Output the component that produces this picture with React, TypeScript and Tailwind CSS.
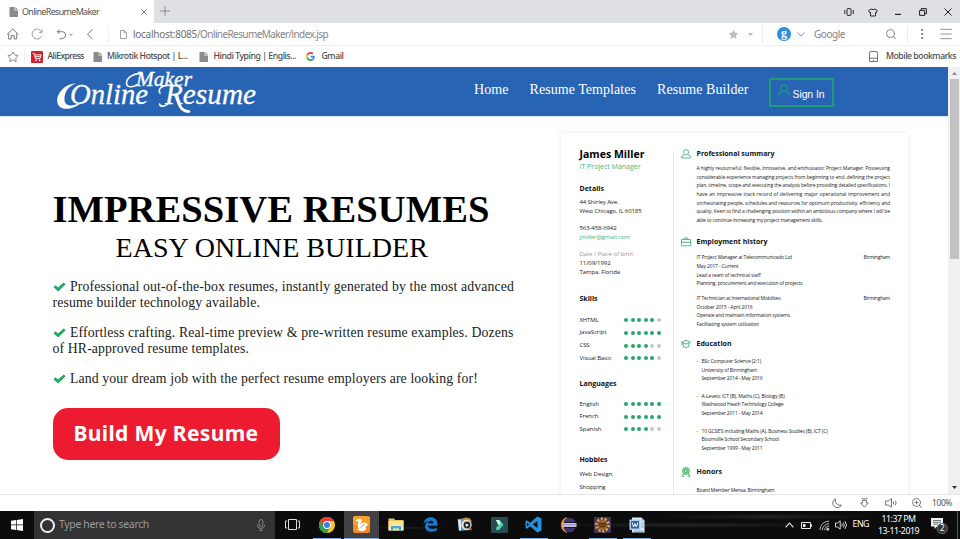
import { useLayoutEffect, useRef, type ReactNode } from "react";
import { Menu, MoreVertical, Search, Star, ZoomIn } from "lucide-react";

/*
 * Single line of text that spans exactly `w` pixels: the slack goes between
 * the letters, or between the words when `words` is set.
 */
function Fit({ w, words, className = "", children }: { w: number; words?: boolean; className?: string; children: string }) {
  const ref = useRef<HTMLSpanElement>(null);
  useLayoutEffect(() => {
    const el = ref.current;
    if (!el) return;
    el.style.letterSpacing = "0px";
    el.style.wordSpacing = "0px";
    const slack = w - el.getBoundingClientRect().width;
    if (words && slack > 0) el.style.wordSpacing = `${slack / (children.split(" ").length - 1)}px`;
    else el.style.letterSpacing = `${slack / children.length}px`;
  }, [w, words, children]);
  return (
    <span ref={ref} className={`inline-block whitespace-nowrap ${className}`}>
      {children}
    </span>
  );
}

function PageIcon({ className = "" }: { className?: string }) {
  return (
    <svg viewBox="0 0 9 10" className={`h-[10px] w-[9px] shrink-0 ${className}`}>
      <path d="M0.5 0H5.6V3.4H9V10H0.5Z" fill="#8b8b8d" />
      <path d="M6.3 0L9 2.7H6.3Z" fill="#8b8b8d" />
    </svg>
  );
}

function TabBar() {
  return (
    <div className="flex h-[23px] shrink-0 bg-[#dfe0e4]">
      <div className="flex w-[154px] items-center bg-white">
        <PageIcon className="ml-[9px]" />
        <Fit w={77} className="ml-[4px] text-[9px] text-[#555]">OnlineResumeMaker</Fit>
        <svg viewBox="0 0 6 6" className="ml-[42px] h-[6px] w-[6px]" stroke="#555" strokeWidth="0.8">
          <path d="M0.3 0.3L5.7 5.7M5.7 0.3L0.3 5.7" />
        </svg>
      </div>
      <svg viewBox="0 0 10 10" className="mt-[6px] ml-[6px] h-[10px] w-[10px]" stroke="#77787c" strokeWidth="0.8">
        <path d="M5 0V10M0 5H10" />
      </svg>
      <div className="ml-auto flex items-center pt-[1px] pr-[8px]">
        <svg viewBox="0 0 10 8" className="h-[8px] w-[10px]" fill="none" stroke="#2b2b2b" strokeWidth="1">
          <rect x="3" y="0.6" width="4" height="6.8" rx="0.6" />
          <path d="M0.8 2V6M9.2 2V6" />
        </svg>
        <svg viewBox="0 0 10 9" className="ml-[14px] h-[9px] w-[10px]" fill="none" stroke="#2b2b2b" strokeWidth="1">
          <path d="M3.2 1Q5 2.400 6.800 1L9.300 2.600L8.400 4.700L7.500 4.400V8H2.500V4.400L1.600 4.700L0.700 2.600Z" />
        </svg>
        <svg viewBox="0 0 6 8" className="ml-[17px] h-[8px] w-[6px]" stroke="#222" strokeWidth="1.2">
          <path d="M0 6.4H6" />
        </svg>
        <svg viewBox="0 0 8 8" className="ml-[18px] h-[8px] w-[8px]" fill="none" stroke="#222" strokeWidth="1">
          <path d="M0.6 2.4H5.6V7.4H0.6ZM2.2 2.2V0.6H7.4V5.8H5.8" />
        </svg>
        <svg viewBox="0 0 8 8" className="ml-[17px] h-[8px] w-[8px]" stroke="#222" strokeWidth="1">
          <path d="M0.5 0.5L7.5 7.5M7.5 0.5L0.5 7.5" />
        </svg>
      </div>
    </div>
  );
}

function AddressBar() {
  return (
    <div className="flex h-[23px] shrink-0 items-center border-b border-[#eeeeef] bg-white">
      <svg viewBox="0 0 110 22" className="h-[22px] w-[110px] shrink-0" fill="none" stroke="#6b6b6b" strokeWidth="0.9">
        <path d="M7 11.5L12.7 6L18.4 11.5M8.7 10.5V16H11.2V12.6H14.2V16H16.7V10.5" />
        <path d="M41.6 13.2A5 5 0 1 1 41.7 9.2M42 6.4V9.4H39.2" stroke="#949494" />
        <path d="M59.5 6.5L57.3 8.7L59.5 10.9M57.5 8.7H62.5Q65.7 9 65.7 12T62 15.8H59.5" />
        <path d="M69.5 10.8L71 12.3L72.5 10.8" />
        <path d="M92.5 6.3L87.5 11.3L92.5 16.3" />
        <path d="M108.5 3V20" stroke="#eeeeef" />
      </svg>
      <svg viewBox="0 0 7 9" className="ml-[10px] h-[9px] w-[7px]" fill="none" stroke="#8c8c8c" strokeWidth="0.8">
        <path d="M0.5 0.5H4.4L6.5 2.6V8.5H0.5ZM4.2 0.6V2.8H6.4" />
      </svg>
      <div className="ml-[6px] flex text-[10px] leading-none">
        <Fit w={64} className="text-[#707070]">localhost:8085</Fit>
        <Fit w={131} className="text-[#858585]">/OnlineResumeMaker/index.jsp</Fit>
      </div>
      <div className="ml-auto flex items-center">
        <Star size={11} fill="#c1c1c4" stroke="none" />
        <svg viewBox="0 0 5 3" className="ml-[9px] h-[3px] w-[5px]"><path d="M0 0H5L2.5 3Z" fill="#b9b9bc" /></svg>
        <div className="ml-[9px] h-[17px] w-px bg-[#ececee]" />
        <div className="ml-[14px] flex h-[14px] w-[14px] items-center justify-center rounded-full bg-[#2a8fe0]">
          <span className="mt-[-3px] font-['Liberation_Serif',serif] text-[12px] leading-none font-bold text-white">g</span>
        </div>
        <svg viewBox="0 0 8 5" className="ml-[6px] h-[5px] w-[8px]" fill="none" stroke="#8a8a8a" strokeWidth="0.9"><path d="M0.5 0.5L4 4.2L7.5 0.5" /></svg>
        <Fit w={31} className="ml-[9px] text-[10px] text-[#858585]">Google</Fit>
        <Search size={12} strokeWidth={1.8} className="ml-[40px] text-[#777]" />
        <div className="ml-[10px] h-[17px] w-px bg-[#ececee]" />
        <MoreVertical size={14} strokeWidth={1.4} className="ml-[7px] text-[#555]" />
        <Menu size={16} strokeWidth={1.2} className="mr-[6px] ml-[9px] text-[#777]" />
      </div>
    </div>
  );
}

function BookmarksBar() {
  return (
    <div className="flex h-[21px] shrink-0 items-center bg-white text-[8.700px] font-medium text-[#4a4a4a]">
      <Star size={12} strokeWidth={1.6} className="ml-[7px] text-[#666]" />
      <div className="ml-[5px] h-[14px] w-px bg-[#efeff0]" />
      <svg viewBox="0 0 12 12" className="ml-[6px] h-[12px] w-[12px]">
        <rect width="12" height="12" rx="1" fill="#d3202c" />
        <path d="M1.6 2.4H3.1L4.5 7.6H9L10.2 3.9H3.6M4 5.7H9.5" fill="none" stroke="#fff" strokeWidth="0.9" />
        <circle cx="5" cy="9.3" r="0.9" fill="#fff" /><circle cx="8.6" cy="9.3" r="0.9" fill="#fff" />
      </svg>
      <Fit w={36.5} className="ml-[4.5px]">AliExpress</Fit>
      <PageIcon className="ml-[8.5px]" />
      <Fit w={80.5} className="ml-[5.5px]">Mikrotik Hotspot | L...</Fit>
      <PageIcon className="ml-[11px]" />
      <Fit w={82.5} className="ml-[6px]">Hindi Typing | Englis...</Fit>
      <svg viewBox="0 0 48 48" className="ml-[9.500px] h-[9px] w-[9px]">
        <path fill="#EA4335" d="M24 9.5c3.5 0 6.700 1.200 9.200 3.600l6.900-6.900C35.900 2.400 30.500 0 24 0 14.600 0 6.500 5.400 2.600 13.200l8 6.200C12.400 13.700 17.700 9.500 24 9.500z" />
        <path fill="#4285F4" d="M47 24.600c0-1.600-.2-3.100-.4-4.600H24v9h12.900c-.6 3-2.300 5.500-4.800 7.200l7.700 6C44.400 38 47 31.900 47 24.600z" />
        <path fill="#FBBC05" d="M10.500 28.600c-.5-1.500-.8-3-.8-4.600s.3-3.100.8-4.600l-8-6.200C.9 16.500 0 20.100 0 24s.9 7.500 2.600 10.800z" />
        <path fill="#34A853" d="M24 48c6.500 0 11.900-2.100 15.900-5.800l-7.700-6c-2.200 1.500-4.900 2.300-8.200 2.300-6.300 0-11.600-4.200-13.500-9.900l-8 6.200C6.500 42.600 14.600 48 24 48z" />
      </svg>
      <Fit w={22} className="ml-[7px]">Gmail</Fit>
      <svg viewBox="0 0 9 11" className="ml-auto h-[11px] w-[9px]" fill="none" stroke="#666" strokeWidth="0.9">
        <path d="M0.5 2Q0.500 0.500 2 0.500H7Q8.500 0.500 8.500 2V10.500H0.500ZM0.500 7.200H8.500M4.500 9V10.200" />
      </svg>
      <Fit w={70} className="mr-[4px] ml-[8px]">Mobile bookmarks</Fit>
    </div>
  );
}

/* Script wordmark with swashes on the capital letters. */
function Logo() {
  return (
    <svg viewBox="0 0 206 46" className="mt-[2px] ml-[56px] h-[46px] w-[206px]" fill="#fff">
      <g fontFamily="'Liberation Serif', serif" fontStyle="italic" stroke="#fff" strokeWidth="0.300">
        <text x="80" y="16.500" fontSize="20" textLength="56" lengthAdjust="spacingAndGlyphs">Maker</text>
        <text x="14" y="35" fontSize="30" textLength="78" lengthAdjust="spacingAndGlyphs">Online</text>
        <text x="109" y="35" fontSize="30" textLength="91" lengthAdjust="spacingAndGlyphs">Resume</text>
      </g>
      <path d="M20 14.500C8 14.500 -0.500 26 1.500 34C3.500 43 19 41 27 32C18 38 9 38 8.500 31C8 24 12 17 20 14.500Z" />
      <g fill="none" stroke="#fff" strokeLinecap="round">
        <path d="M86 4.500C78 3.500 70 9 70.500 14.500C71 19 78 18.500 81 15.500" strokeWidth="1.600" />
        <path d="M116 16.500C107 15 101 20 104 24" strokeWidth="1.600" />
        <path d="M113 34C109 38 104 38 103.500 35" strokeWidth="1.600" />
        <path d="M121 26C122 36 126 42.500 133 42.500" strokeWidth="2.600" />
      </g>
    </svg>
  );
}

function SiteNav() {
  return (
    <nav className="flex h-[49px] shrink-0 bg-[#2864b4] font-['Liberation_Serif',serif] text-[14px] leading-[16px] text-white">
      <Logo />
      <div className="mt-[14.500px] ml-[212px] flex">
        <Fit w={34.5}>Home</Fit>
        <Fit w={106.5} className="ml-[21px]">Resume Templates</Fit>
        <Fit w={91.5} className="ml-[21px]">Resume Builder</Fit>
      </div>
      <button className="mt-[11px] ml-[20px] flex h-[29px] w-[65px] items-center border-2 border-[#1f9c74] pl-[7px]">
        <svg viewBox="0 0 12 13" className="mt-[-4px] h-[13px] w-[12px] shrink-0" fill="none" stroke="#1f9c7c" strokeWidth="1.2">
          <circle cx="6" cy="4" r="3.2" />
          <path d="M0.700 12.500C0.700 9.500 2.500 7.800 4.200 7.200M11.300 12.500C11.300 9.500 9.500 7.800 7.800 7.200" />
        </svg>
        <Fit w={32} className="mt-[3px] ml-[3px] font-['Liberation_Sans',sans-serif] text-[10.500px]">Sign In</Fit>
      </button>
    </nav>
  );
}

function Check() {
  return (
    <svg viewBox="0 0 13 10" className="mr-[4.500px] inline-block h-[10px] w-[13px] align-[-1px]">
      <path d="M0.500 5.300L2.600 3.300L5 5.500L10.600 0.400L12.700 2.200L5.100 9.600Z" fill="#20a964" />
    </svg>
  );
}

function Hero() {
  return (
    <section className="w-[561px] shrink-0 pt-[70px] pl-[52.500px] font-['Liberation_Serif',serif] text-black">
      <h1 className="h-[44px] text-[38.600px] leading-[45px] font-bold"><Fit w={437}>IMPRESSIVE RESUMES</Fit></h1>
      <h2 className="h-[33px] pl-[63px] text-[28px] leading-[33px]"><Fit w={312.5}>EASY ONLINE BUILDER</Fit></h2>
      <div className="mt-[14.500px] text-[13.800px] leading-[16px] text-[#222]">
        <p className="h-[32px] whitespace-nowrap">
          <Check /><Fit w={444}>Professional out-of-the-box resumes, instantly generated by the most advanced</Fit>
          <br /><Fit w={207.5}>resume builder technology available.</Fit>
        </p>
        <p className="mt-[14px] h-[32px] whitespace-nowrap">
          <Check /><Fit w={443.5}>Effortless crafting. Real-time preview &amp; pre-written resume examples. Dozens</Fit>
          <br /><Fit w={196.5}>of HR-approved resume templates.</Fit>
        </p>
        <p className="mt-[14.500px] h-[16px] whitespace-nowrap">
          <Check /><Fit w={408}>Land your dream job with the perfect resume employers are looking for!</Fit>
        </p>
      </div>
      <button className="mt-[20.500px] flex h-[52.500px] w-[227.500px] items-center rounded-[15px] bg-[#ed1b2f] pl-[21px] font-['Noto_Sans','Open_Sans',sans-serif] text-[21px] font-bold text-white">
        <Fit w={185} className="mt-[-1px]">Build My Resume</Fit>
      </button>
    </section>
  );
}

const L = "h-[8.7px] leading-[8.7px]";

function Heading({ w, className, icon, children }: { w: number; className: string; icon?: ReactNode; children: string }) {
  return (
    <h3 className={`flex h-[12px] items-center text-[7px] leading-[12px] font-bold text-[#111] ${className}`}>
      {icon && <span className="w-[15.500px]">{icon}</span>}
      <Fit w={w}>{children}</Fit>
    </h3>
  );
}

function Rated({ w, score, children }: { w: number; score: number; children: string }) {
  return (
    <div className="flex h-[12.7px] items-center leading-[12.7px]">
      <div className="w-[44.500px]"><Fit w={w}>{children}</Fit></div>
      <div className="flex gap-[2.600px]">
        {[0, 1, 2, 3, 4, 5].map((i) => (
          <span key={i} className={`h-[4px] w-[4px] rounded-full ${i < score ? "bg-[#27a56a]" : "bg-[#c8c8c8]"}`} />
        ))}
      </div>
    </div>
  );
}

const summary = [
  "A highly resourceful, flexible, innovative, and enthusiastic Project Manager. Possessing",
  "considerable experience managing projects from beginning to end, defining the project",
  "plan, timeline, scope and executing the analysis before providing detailed specifications. I",
  "have an impressive track record of delivering major operational improvement and",
  "orchestrating people, schedules and resources for optimum productivity, efficiency and",
  "quality. Keen to find a challenging position within an ambitious company where I will be",
];

function School({ rows, className }: { rows: [string, number][]; className: string }) {
  return (
    <div className={`flex pl-[15.500px] ${className}`}>
      <span className={`w-[5px] ${L}`}>-</span>
      <div>
        {rows.map(([t, w]) => <div key={t} className={L}><Fit w={w}>{t}</Fit></div>)}
      </div>
    </div>
  );
}

function Job({ rows, className }: { rows: [string, number][]; className: string }) {
  return (
    <div className={`flex justify-between pl-[15.500px] ${className}`}>
      <div>
        {rows.map(([t, w]) => <div key={t} className={L}><Fit w={w}>{t}</Fit></div>)}
      </div>
      <span className={L}><Fit w={26.5}>Birmingham</Fit></span>
    </div>
  );
}

const iconCls = "h-[10px] w-[10px]";

function ResumeCard() {
  return (
    <article className="mt-[16px] flex h-[420px] w-[347px] shrink-0 bg-white font-['Open_Sans','Noto_Sans',sans-serif] text-[6px] text-[#222] shadow-[0_0_6px_rgba(0,0,0,0.09)]">
      <div className="w-[112px] shrink-0 pt-[13.500px] pl-[18.500px]">
        <div className="h-[14px] text-[10.500px] leading-[14px] font-bold text-black"><Fit w={65}>James Miller</Fit></div>
        <div className="h-[11.600px] text-[7px] leading-[11.600px] text-[#3fb47b]"><Fit w={61}>IT Project Manager</Fit></div>
        <Heading w={24.5} className="mt-[10.600px]">Details</Heading>
        <div className={`mt-[3.650px] ${L}`}><Fit w={39}>44 Shirley Ave.</Fit></div>
        <div className={L}><Fit w={62}>West Chicago, IL 60185</Fit></div>
        <div className={`mt-[8.700px] ${L}`}><Fit w={37}>563-458-6942</Fit></div>
        <div className={`text-[#3fb47b] ${L}`}><Fit w={50.5}>jmiller@gmail.com</Fit></div>
        <div className={`mt-[8.700px] text-[#999] ${L}`}><Fit w={54}>Date / Place of birth</Fit></div>
        <div className={L}><Fit w={31}>11/09/1992</Fit></div>
        <div className={L}><Fit w={40.5}>Tampa, Florida</Fit></div>
        <Heading w={18} className="mt-[16.650px]">Skills</Heading>
        <div className="mt-[8.650px]">
          <Rated w={19} score={5}>XHTML</Rated>
          <Rated w={27} score={6}>JavaScript</Rated>
          <Rated w={10} score={4}>CSS</Rated>
          <Rated w={32} score={5}>Visual Basic</Rated>
        </div>
        <Heading w={37} className="mt-[13.550px]">Languages</Heading>
        <div className="mt-[7.650px]">
          <Rated w={19.5} score={6}>English</Rated>
          <Rated w={19} score={6}>French</Rated>
          <Rated w={22} score={4}>Spanish</Rated>
        </div>
        <Heading w={28} className="mt-[18.050px]">Hobbies</Heading>
        <div className="mt-[2.650px] h-[12.700px] leading-[12.700px]"><Fit w={33}>Web Design</Fit></div>
        <div className="h-[12.700px] leading-[12.700px]"><Fit w={26}>Shopping</Fit></div>
      </div>
      <div className="mt-[19px] w-px shrink-0 bg-[#dff0ea]" />
      <div className="w-[216px] shrink-0 pt-[14.800px] pl-[7px] text-[5px]">
        <Heading w={78} className="" icon={
          <svg viewBox="0 0 10 10" className={iconCls} fill="none" stroke="#3fb98a" strokeWidth="0.9"><circle cx="5" cy="3.200" r="2.600" /><path d="M3.200 5.500L0.800 7V9H9.200V7L6.800 5.500" /></svg>
        }>Professional summary</Heading>
        <div className="mt-[4.150px] pl-[15.500px]">
          {summary.map((line) => (
            <div key={line} className={L}><Fit w={193.5} words>{line}</Fit></div>
          ))}
          <div className={L}><Fit w={126}>able to continue increasing my project management skills.</Fit></div>
        </div>
        <Heading w={71} className="mt-[11.250px]" icon={
          <svg viewBox="0 0 10 10" className={iconCls} fill="none" stroke="#3fb98a" strokeWidth="0.9"><path d="M0.500 2.500H9.500V8.800H0.500ZM3.200 2.500V1H6.800V2.500M0.500 5.300H9.500M3 4.800V6M7 4.800V6" /></svg>
        }>Employment history</Heading>
        <Job className="mt-[5.150px]" rows={[["IT Project Manager at Telecommunicado Ltd", 95.500], ["May 2017 - Current", 42], ["Lead a team of technical staff", 64], ["Planning, procurement and execution of projects", 106]]} />
        <Job className="mt-[6.200px]" rows={[["IT Technician at International Mobilites", 84], ["October 2015 - April 2016", 56], ["Operate and maintain information systems", 93.500], ["Facilitating system utilization", 62.500]]} />
        <Heading w={35} className="mt-[9.550px]" icon={
          <svg viewBox="0 0 10 10" className={iconCls} fill="none" stroke="#3fb96c" strokeWidth="0.9"><path d="M0.400 3.200L5 1.300L9.600 3.200L5 5.100ZM2.200 4V7.800Q5 9 7.800 7.800V4M0.800 3.400V6" /></svg>
        }>Education</Heading>
        <School className="mt-[6.650px]" rows={[["BSc Computer Science (2:1)", 59.500], ["University of Birmingham", 55.500], ["September 2014 - May 2016", 61]]} />
        <School className="mt-[8.700px]" rows={[["A-Levels: ICT (B), Maths (C), Biology (B)", 83], ["Washwood Heath Technology College", 82], ["September 2011 - May 2014", 61]]} />
        <School className="mt-[8.700px]" rows={[["10 GCSE'S including Maths (A), Business Studies (B), ICT (C)", 126], ["Bournville School Secondary School", 77.500], ["September 1999 - May 2011", 61]]} />
        <Heading w={25.5} className="mt-[13.650px]" icon={
          <svg viewBox="0 0 10 10" className={iconCls} fill="none" stroke="#3fb96c" strokeWidth="1"><circle cx="5" cy="4" r="3.400" fill="#a5e0c0" /><circle cx="5" cy="4" r="1.700" /><path d="M2.600 6.500L1.200 9.300H3.200M7.400 6.500L8.800 9.300H6.800" /></svg>
        }>Honors</Heading>
        <div className={`mt-[8.250px] pl-[15.500px] ${L}`}><Fit w={78}>Board Member Mensa, Birmingham</Fit></div>
      </div>
    </article>
  );
}

function StatusBar() {
  return (
    <div className="flex h-[17px] shrink-0 items-center border-t border-[#e6e6e6] bg-white text-[#666]">
      <svg viewBox="0 0 10 10" className="ml-[832px] h-[10px] w-[10px]" fill="none" stroke="currentColor" strokeWidth="0.9"><path d="M3.500 0.800A4.600 4.600 0 1 0 9.500 7A4.800 4.800 0 0 1 3.500 0.800Z" /></svg>
      <svg viewBox="0 0 9 10" className="ml-[18px] h-[10px] w-[9px]" fill="none" stroke="currentColor" strokeWidth="0.9"><path d="M1.500 0.800H7.500M2.500 2.500H6.500V5H8.300L4.500 9.200L0.700 5H2.500Z" /></svg>
      <svg viewBox="0 0 13 10" className="ml-[16px] h-[10px] w-[13px]" fill="none" stroke="currentColor" strokeWidth="0.9"><path d="M0.500 3H3.300L6.500 0.800V9.200L3.300 7H0.500ZM8.500 3.500V6.500M10.300 2.700Q11.900 5 10.300 7.300" /></svg>
      <ZoomIn size={12} strokeWidth={1.7} className="ml-[13px]" />
      <Fit w={20} className="ml-[9px] text-[8.500px] text-[#555]">100%</Fit>
    </div>
  );
}

function Task({ running, active, children }: { running?: boolean; active?: boolean; children: ReactNode }) {
  return (
    <div className={`flex h-full w-[34.500px] shrink-0 flex-col items-center ${active ? "bg-[#424245]" : ""}`}>
      <div className="flex h-[26.500px] items-center pt-[1px]">{children}</div>
      {running && <div className={`h-[1.500px] bg-[#76b0e6] ${active ? "w-full" : "w-[28px]"}`} />}
    </div>
  );
}

function Taskbar() {
  return (
    <footer className="flex h-[28px] shrink-0 bg-[#0c0c0d] bg-[radial-gradient(ellipse_at_72%_50%,#26272a_0%,#16171900_14%),radial-gradient(ellipse_at_80%_20%,#222326_0%,#16171900_10%),radial-gradient(ellipse_at_42%_60%,#1e1f21_0%,#16171900_6%)]">
      <div className="flex w-[34px] items-center pl-[11px]">
        <svg viewBox="0 0 12 12" className="h-[12px] w-[12px]" fill="#fff"><path d="M0 1.700L5 1V5.600H0ZM5.700 0.900L12 0V5.600H5.700ZM0 6.300H5V11L0 10.300ZM5.700 6.300H12V12L5.700 11.100Z" /></svg>
      </div>
      <div className="flex w-[241px] items-center bg-[#333335]">
        <span className="ml-[6px] h-[15px] w-[15px] rounded-full border-2 border-[#eee]" />
        <Fit w={90} className="ml-[4px] text-[10.500px] text-[#9a9a9a]">Type here to search</Fit>
        <svg viewBox="0 0 8 12" className="ml-[108px] h-[12px] w-[8px]" fill="none" stroke="#8c8c8c" strokeWidth="0.9"><rect x="2.200" y="0.500" width="3.600" height="7" rx="1.800" /><path d="M0.600 5.500V7Q0.800 9.400 4 9.400T7.400 7V5.500M4 9.400V11.500M2.500 11.500H5.500" /></svg>
      </div>
      <Task><svg viewBox="0 0 15 11" className="h-[11px] w-[15px]" fill="none" stroke="#ddd" strokeWidth="1"><path d="M3.500 0.500H11.500V10.500H3.500ZM2.200 2H0.500V9H2.200M12.800 2H14.500V9H12.800" /></svg></Task>
      <Task running>
        <svg viewBox="0 0 16 16" className="h-[16px] w-[16px]"><circle cx="8" cy="8" r="8" fill="#f8c81c" /><path d="M1.070 4A8 8 0 0 0 8 16L11.100 9.800L8 8L4.800 9.900Z" fill="#2ba24c" /><path d="M8 4H14.930A8 8 0 0 0 1.070 4L4.700 10Z" fill="#e23e32" /><circle cx="8" cy="8" r="3.900" fill="#fff" /><circle cx="8" cy="8" r="3" fill="#3c7de6" /></svg>
      </Task>
      <Task running active>
        <svg viewBox="0 0 17 17" className="h-[17px] w-[17px]"><rect width="17" height="17" rx="2.500" fill="#f68a1c" /><rect x="0" y="0" width="17" height="9" rx="2.500" fill="#f9a02a" /><path d="M2.500 4.800C4.500 2.200 8.500 2 8.800 4.600C9 6.300 7.300 7.200 7.300 8.400C9 6.600 12 5.600 13.800 7.200C15.600 9 13.800 11.300 12 10.300C13.600 12 13.400 14.500 10.500 14.900C7.500 15.300 5 14.600 3.500 13.200L6 12.700C4.300 10.900 4.300 9 5.600 7.200C6.300 6 4.500 5.600 2.500 4.800Z" fill="#fff" /><path d="M7.800 11.800Q8.500 9 11.500 8.700" stroke="#f68a1c" strokeWidth="0.900" fill="none" /></svg>
      </Task>
      <Task>
        <svg viewBox="0 0 16 13" className="h-[13px] w-[16px]"><path d="M0.500 0.500H6L7 2H15.500V12.500H0.500Z" fill="#f0c75f" /><path d="M0.500 3H15.500V12.500H0.500Z" fill="#fbe49a" /><path d="M3 12.700V8H13V12.700H11V10.500H5V12.700Z" fill="#4aa9dc" /></svg>
      </Task>
      <Task>
        <svg viewBox="0 0 15 15" className="h-[15px] w-[15px]"><path d="M0.500 7.200C1 2.800 4 0.300 7.800 0.300C12 0.300 14.500 3.300 14.500 7.300V8.800H5C5.200 11 7 12 9.200 12C11 12 12.600 11.500 13.800 10.800V13.600C12.400 14.400 10.700 14.800 8.600 14.800C4.600 14.800 2 12.600 2 9.400C2 7 3.300 5.200 5.600 4.300C3.400 4.500 1.600 5.400 0.500 7.200ZM5 6.300H10.400C10.400 4.700 9.500 3.700 7.900 3.700C6.300 3.700 5.300 4.800 5 6.300Z" fill="#1679d3" /></svg>
      </Task>
      <Task>
        <svg viewBox="0 0 16 15" className="h-[15px] w-[16px]"><path d="M0.500 2L13 1V13L2 14Z" fill="#5599ba" /><path d="M1 3L4 2.500V13L2 13.500Z" fill="#dbeaf0" /><circle cx="9.500" cy="7.800" r="5.200" fill="#eadfcf" /><circle cx="10" cy="8" r="3.400" fill="#20272d" /><path d="M8.500 6.500L12 8L9 10Z" fill="#fff" /><path d="M6 2Q11-0.500 14.500 4.500" stroke="#c88a35" strokeWidth="1.300" fill="none" /><circle cx="13.200" cy="11.900" r="1.500" fill="#ad6a32" /></svg>
      </Task>
      <Task>
        <svg viewBox="0 0 17 16" className="h-[16px] w-[17px]"><rect width="17" height="16" rx="1" fill="#284c50" /><path d="M5 3H8.500L12.500 7.800L8 13H5L5.500 10L8 8Z" fill="#48d9b0" /><path d="M5 3H8L9.800 6L7.300 8.300Z" fill="#c9fff0" /></svg>
      </Task>
      <Task running>
        <svg viewBox="0 0 17 17" className="h-[17px] w-[17px]"><path d="M12.300 0.500L16.500 2.400V14.600L12.300 16.500L5.200 10.200L1.800 12.800L0.500 12V5L1.800 4.200L5.200 6.800ZM12.400 5L7.800 8.500L12.400 12ZM2 6.500V10.500L4 8.500Z" fill="#2590dc" fillRule="evenodd" /></svg>
      </Task>
      <Task>
        <svg viewBox="0 0 17 16" className="h-[16px] w-[17px]"><path d="M7 0.500A7.800 7.800 0 0 0 7 15.500A9.500 9.500 0 0 1 7 0.500Z" fill="#f3972f" stroke="#f3972f" strokeWidth="0.700" /><path d="M3.500 5.300A6.200 6.200 0 0 1 15.500 5.300ZM3.500 10.700A6.200 6.200 0 0 0 15.500 10.700Z" fill="#3d3470" /><path d="M2.700 6H16.500V10H2.700Z" fill="#c9c2e2" /><path d="M2.700 7.800H16.500" stroke="#6a60a2" strokeWidth="0.600" /></svg>
      </Task>
      <Task running>
        <svg viewBox="0 0 17 16" className="h-[16px] w-[17px]"><rect width="17" height="16" fill="#413453" /><circle cx="8.500" cy="8" r="6.200" fill="none" stroke="#d7a05e" strokeWidth="2.600" strokeDasharray="2.300 1.500" /><circle cx="8.500" cy="8" r="5" fill="#a1662c" /><path d="M5 6.300H12M4.500 8H12.500M5.500 9.800H11.500" stroke="#39230f" strokeWidth="0.900" /></svg>
      </Task>
      <Task running>
        <svg viewBox="0 0 16 16" className="h-[16px] w-[16px]"><path d="M3 0.500H12.500L15.500 3.500V15.500H3Z" fill="#dbe8f5" /><path d="M12.500 0.500V3.500H15.500Z" fill="#86a8cf" /><rect x="0.500" y="2.500" width="11" height="10.500" rx="0.800" fill="#b5cdea" /><rect x="2" y="4" width="8" height="7.500" fill="#315e9c" /><path d="M3.200 5.500L4.600 10L6 6.600L7.400 10L8.800 5.500" fill="none" stroke="#fff" strokeWidth="1" /><path d="M12.500 6H14.500M12.500 8H14.500M12.500 10H14.500M5 14.200H14" stroke="#6590c4" strokeWidth="0.800" /></svg>
      </Task>
      <div className="ml-auto flex items-center pr-[2px] text-white">
        <svg viewBox="0 0 9 6" className="h-[6px] w-[9px]" fill="none" stroke="#eee" strokeWidth="1.100"><path d="M0.600 5.300L4.500 1L8.400 5.300" /></svg>
        <svg viewBox="0 0 11 7" className="ml-[7px] h-[7px] w-[11px]" fill="none" stroke="#e8e8e8" strokeWidth="1"><path d="M0.500 0.500H9.500V6.500H0.500ZM10.500 2.300V4.700" /><path d="M2 2H4.500V5H2Z" fill="#e8e8e8" stroke="none" /></svg>
        <svg viewBox="0 0 11 11" className="ml-[7px] h-[11px] w-[11px]" fill="none" stroke="#ccc" strokeWidth="0.900"><path d="M0.800 10A9.500 9.500 0 0 1 10 1M3.300 10.300A7 7 0 0 1 10.200 3.600M5.700 10.300A4.600 4.600 0 0 1 10.200 6" /><circle cx="8.800" cy="9.200" r="1.100" fill="#ccc" /></svg>
        <svg viewBox="0 0 13 10" className="ml-[5px] h-[10px] w-[13px]" fill="none" stroke="#e8e8e8" strokeWidth="0.900"><path d="M0.500 3H2.600L5.200 0.800V9.200L2.600 7H0.500ZM6.700 3.600Q7.700 5 6.700 6.400M8.300 2.400Q10.300 5 8.300 7.600M10 1.200Q13 5 10 8.800" /></svg>
        <Fit w={16.5} className="ml-[5px] text-[8.800px]">ENG</Fit>
        <div className="ml-[9px] flex w-[41px] flex-col items-center text-[8.800px] leading-[12.500px]">
          <Fit w={34}>11:37 PM</Fit>
          <Fit w={41}>13-11-2019</Fit>
        </div>
        <svg viewBox="0 0 19 18" className="mt-[2px] ml-[11px] h-[18px] w-[19px]">
          <path d="M1 1H13V9.500H7L4.500 12V9.500H1Z" fill="#f0f0f0" /><path d="M3 3.500H11M3 5.300H11M3 7.100H8" stroke="#444" strokeWidth="0.700" />
          <circle cx="12.200" cy="11.500" r="5.200" fill="#333437" stroke="#909090" strokeWidth="0.700" />
          <text x="12.200" y="14.300" fontSize="8" fill="#fff" textAnchor="middle">2</text>
        </svg>
        <div className="ml-[8px] h-[28px] w-px bg-[#555]" />
      </div>
    </footer>
  );
}

export default function App() {
  return (
    <div className="flex h-[539px] w-[960px] flex-col overflow-hidden bg-white font-['Noto_Sans','Open_Sans',sans-serif]">
      <TabBar />
      <AddressBar />
      <BookmarksBar />
      <div className="flex h-[427px] shrink-0 overflow-hidden">
        <div className="flex w-[948px] shrink-0 flex-col">
          <SiteNav />
          <main className="flex h-[378px] overflow-hidden border-t border-[#dbeaf5]">
            <Hero />
            <ResumeCard />
          </main>
        </div>
        <div className="flex w-[12px] flex-col items-center bg-[#f0f0f0]">
          <svg viewBox="0 0 5 3" className="mt-[5px] h-[3px] w-[5px]"><path d="M0 3H5L2.500 0Z" fill="#8a8a8a" /></svg>
          <div className="mt-[4px] h-[180px] w-[9px] bg-[#c1c1c1]" />
          <svg viewBox="0 0 5 3" className="mt-auto mb-[5px] h-[3px] w-[5px]"><path d="M0 0H5L2.500 3Z" fill="#333" /></svg>
        </div>
      </div>
      <StatusBar />
      <Taskbar />
    </div>
  );
}
